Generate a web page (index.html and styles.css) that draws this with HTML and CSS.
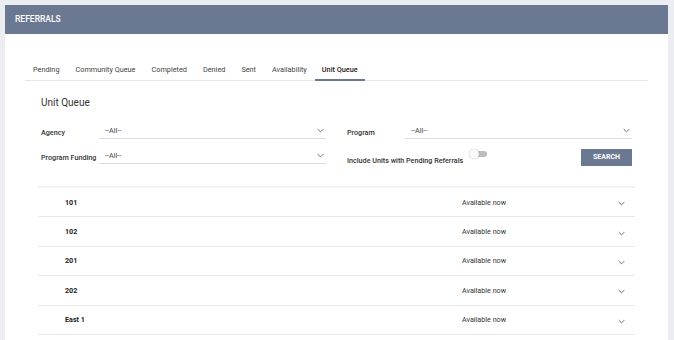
FILE: index.html
```html
<!DOCTYPE html>
<html lang="en">
<head>
    <meta charset="UTF-8">
    <meta name="viewport" content="width=device-width, initial-scale=1.0">
    <title>Referrals</title>
    <link rel="stylesheet" href="styles.css">
</head>
<body>
    <div class="card">
        <header class="card-header">REFERRALS</header>

        <nav class="tabs">
            <a class="tab">Pending</a>
            <a class="tab">Community Queue</a>
            <a class="tab">Completed</a>
            <a class="tab">Denied</a>
            <a class="tab">Sent</a>
            <a class="tab">Availability</a>
            <a class="tab active">Unit Queue</a>
        </nav>

        <div class="content">
            <h2>Unit Queue</h2>

            <div class="filters">
                <div class="field">
                    <label>Agency</label>
                    <div class="select"><span>--All--</span>
                        <svg viewBox="0 0 10 6" class="chev"><path d="M1 1l4 4 4-4"/></svg>
                    </div>
                </div>
                <div class="field">
                    <label>Program</label>
                    <div class="select"><span>--All--</span>
                        <svg viewBox="0 0 10 6" class="chev"><path d="M1 1l4 4 4-4"/></svg>
                    </div>
                </div>
                <div class="field">
                    <label>Program Funding</label>
                    <div class="select"><span>--All--</span>
                        <svg viewBox="0 0 10 6" class="chev"><path d="M1 1l4 4 4-4"/></svg>
                    </div>
                </div>
                <div class="field">
                    <label class="wide">Include Units with Pending Referrals</label>
                    <span class="toggle"><span class="knob"></span></span>
                    <button class="btn">SEARCH</button>
                </div>
            </div>
        </div>

        <div class="units">
            <div class="unit"><b>101</b><span class="status">Available now</span>
                <svg viewBox="0 0 10 6" class="chev"><path d="M1 1l4 4 4-4"/></svg></div>
            <div class="unit"><b>102</b><span class="status">Available now</span>
                <svg viewBox="0 0 10 6" class="chev"><path d="M1 1l4 4 4-4"/></svg></div>
            <div class="unit"><b>201</b><span class="status">Available now</span>
                <svg viewBox="0 0 10 6" class="chev"><path d="M1 1l4 4 4-4"/></svg></div>
            <div class="unit"><b>202</b><span class="status">Available now</span>
                <svg viewBox="0 0 10 6" class="chev"><path d="M1 1l4 4 4-4"/></svg></div>
            <div class="unit"><b>East 1</b><span class="status">Available now</span>
                <svg viewBox="0 0 10 6" class="chev"><path d="M1 1l4 4 4-4"/></svg></div>
        </div>
    </div>
</body>
</html>
```

FILE: styles.css
```css
body {
    font-family: Roboto, "Liberation Sans", sans-serif;
    background-color: #ecedf2;
    color: #333;
    margin: 0;
    padding: 5px 6px 0 5px;
    height: 340px;
    box-sizing: border-box;
    overflow: hidden;
}
.card {
    background-color: #fff;
    height: 100%;
}
.card-header {
    background-color: #6b7891;
    color: #fff;
    height: 29px;
    line-height: 29px;
    padding-left: 10px;
    font-size: 8.5px;
    font-weight: 500;
}
.tabs {
    display: flex;
    margin: 25px 20px 0 20px;
    border-bottom: 1px solid #e6e6e6;
}
.tab {
    font-size: 7.3px;
    color: #444;
    padding: 6px 8px 5px 8px;
    border-bottom: 2px solid transparent;
    margin-bottom: -1px;
}
.tab.active {
    font-weight: 500;
    color: #222;
    padding: 6px 7px 5px 7px;
    border-bottom-color: #6b7891;
}
.content {
    padding: 0 36px;
}
h2 {
    font-size: 10px;
    font-weight: 400;
    margin: 16px 0 15px 0;
    color: #333;
}
.filters {
    display: grid;
    grid-template-columns: 1fr 1fr;
    column-gap: 21px;
    row-gap: 9px;
}
.field {
    display: flex;
    align-items: center;
    height: 16px;
}
label {
    font-size: 7.2px;
    font-weight: 500;
    color: #333;
    min-width: 58px;
    white-space: nowrap;
    margin-top: 3px;
}
label.wide {
    margin-top: 8px;
}
.select {
    flex: 1;
    display: flex;
    align-items: center;
    justify-content: space-between;
    border-bottom: 1px solid #ddd;
    height: 15px;
    padding: 0 2px 0 6px;
    font-size: 7.2px;
    color: #444;
}
.chev {
    width: 7px;
    height: 5px;
    fill: none;
    stroke: #555;
    stroke-width: 1.2;
}
.toggle {
    position: relative;
    width: 16px;
    height: 6px;
    margin-left: 8px;
    margin-top: -4px;
    border-radius: 3px;
    background-color: #bcbcbc;
}
.knob {
    position: absolute;
    left: -2px;
    top: -2px;
    width: 10px;
    height: 10px;
    border-radius: 50%;
    background-color: #fafafa;
    box-shadow: 0 0 1px rgba(0, 0, 0, 0.4);
}
.btn {
    margin-left: auto;
    margin-top: 2px;
    width: 51px;
    height: 17px;
    border: none;
    background-color: #6b7891;
    color: #fff;
    font-family: inherit;
    font-size: 7px;
    font-weight: 700;
    padding: 0;
}
.units {
    margin: 22px 33px 0 33px;
    border-top: 2px solid #f2f2f2;
}
.unit {
    display: flex;
    align-items: center;
    height: 28.4px;
    border-bottom: 1px solid #e8e8e8;
    padding-left: 27px;
    padding-right: 10px;
    font-size: 7.2px;
}
.unit b {
    width: 397px;
    font-weight: 700;
    color: #222;
}
.status {
    flex: 1;
    color: #333;
}
.unit .chev {
    margin-top: 3px;
}
```
